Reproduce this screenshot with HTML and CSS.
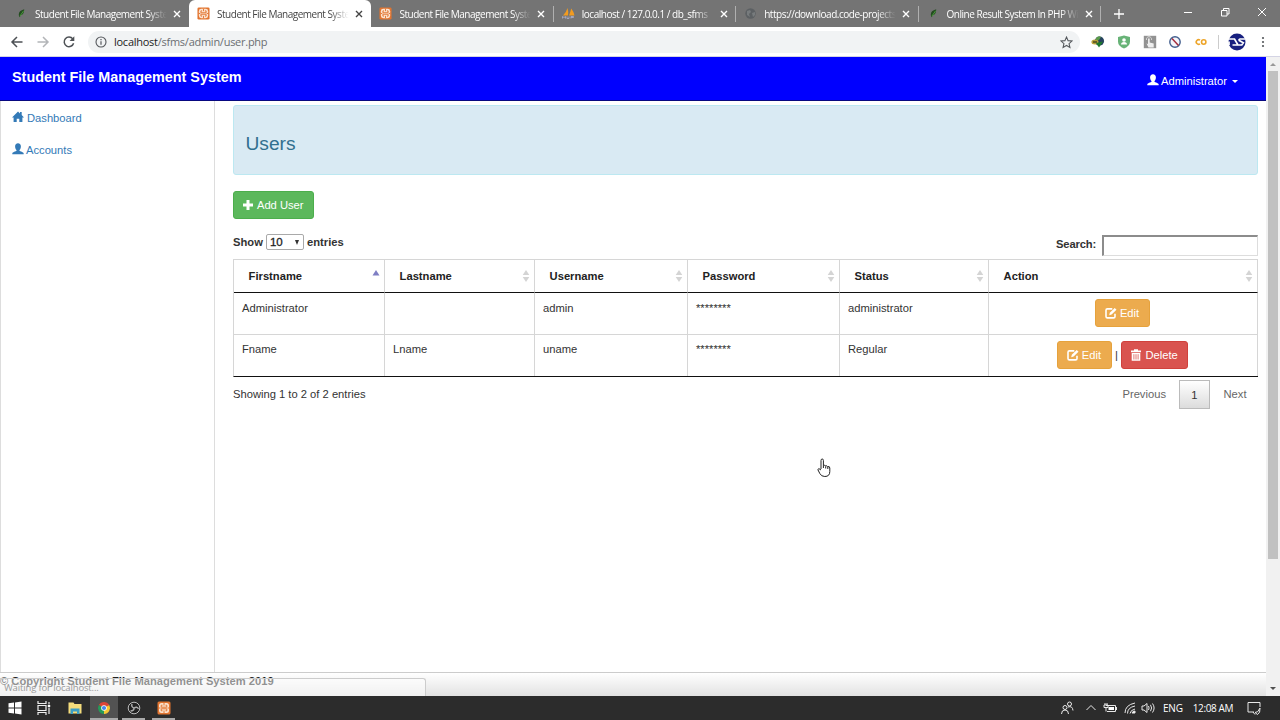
FILE: index.html
```html
<!DOCTYPE html>
<html lang="en">
<head>
    <meta charset="UTF-8">
    <title>Student File Management System</title>
    <link rel="stylesheet" href="styles.css">
</head>
<body>
    <svg class="defs" width="0" height="0">
        <symbol id="xampp" viewBox="0 0 14 14">
            <rect x="0.5" y="0.5" width="13" height="13" rx="1.500" fill="#e2742f"/>
            <rect x="2" y="2" width="10" height="10" rx="2.500" fill="#fbe3d0"/>
            <path d="M5.500 4.200H4.200v2h5.600v-2H8.500M5.500 9.800H4.200v-2h5.600v2H8.500M7 2v2.500M7 9.500V12M2 7h1.500M10.500 7H12" fill="none" stroke="#e2742f" stroke-width="1"/>
        </symbol>
        <symbol id="leaf" viewBox="0 0 12 12">
            <path d="M8.500 2C5 3 3.500 4.500 3.500 7c0 1 .3 2 .8 2.500L5.500 7.500C7.500 7 8.500 5 8.500 2z" fill="#234c20"/>
            <path d="M4.500 8.500L8 3.500" stroke="#4b9b3c" stroke-width=".9" fill="none"/>
        </symbol>
        <symbol id="user" viewBox="0 0 12 12">
            <path d="M6 .3c1.800 0 2.900 1.300 2.900 3.100 0 1.500-.6 2.900-1.400 3.500v.8c.5.700 4.200 1.200 4.200 2.900v.7H.3v-.7c0-1.700 3.700-2.200 4.200-2.900v-.8C3.700 6.300 3.100 4.900 3.100 3.400 3.100 1.600 4.200.3 6 .3z" fill="currentColor"/>
        </symbol>
        <symbol id="home" viewBox="0 0 12 12">
            <path d="M6 .4l2 2V1h1.700v3.100L12 6.500h-1.600V11H7.300V7.700H4.700V11H1.600V6.500H0z" fill="currentColor"/>
        </symbol>
        <symbol id="edit" viewBox="0 0 12 12">
            <path d="M7.300 1.900H2.400Q1 1.900 1 3.300v6.200q0 1.400 1.400 1.400h6.200q1.400 0 1.400-1.400V6.800" fill="none" stroke="currentColor" stroke-width="1.600"/>
            <path d="M4.200 8.200l.6-2.400L9.700.9l1.800 1.800-4.900 4.900z" fill="currentColor"/>
        </symbol>
        <symbol id="trash" viewBox="0 0 12 12">
            <path d="M4 .3h4v1.200h3v1.800H1V1.500h3zM1.700 4h8.600v7.700H1.700z" fill="currentColor"/>
            <path d="M3.900 5.200v5.300M6 5.200v5.300M8.100 5.200v5.300" stroke="#d9534f" stroke-width=".8"/>
        </symbol>
        <symbol id="sort" viewBox="0 0 8 12">
            <path d="M4 0l3.300 5H.7zM.7 7h6.600L4 12z" fill="#d4d4d4"/>
        </symbol>
        <symbol id="close" viewBox="0 0 8 8">
            <path d="M1 1l6 6M7 1L1 7" stroke="currentColor" stroke-width="1.400"/>
        </symbol>
    </svg>

    <div class="tabs">
        <div class="tab first">
            <svg class="favicon"><use href="#leaf"/></svg>
            <span class="tab-title">Student File Management System</span>
            <svg class="tab-close"><use href="#close"/></svg>
        </div>
        <div class="tab active">
            <svg class="favicon"><use href="#xampp"/></svg>
            <span class="tab-title">Student File Management System</span>
            <svg class="tab-close"><use href="#close"/></svg>
        </div>
        <div class="tab line">
            <svg class="favicon"><use href="#xampp"/></svg>
            <span class="tab-title">Student File Management System</span>
            <svg class="tab-close"><use href="#close"/></svg>
        </div>
        <div class="tab line">
            <svg class="favicon" viewBox="0 0 13 13">
                <path d="M1 8.500Q4 6 5.500 1q1.200 4 .5 7.500zM7 8.500Q8.500 5 9.200 1.500 12 5 12.500 8.500z" fill="#f29b1f"/>
                <path d="M.5 11.500v-2l1.500 1 1.500-1v2M5 9.500v2h2v-2M9 11.500v-2h2.500v1H9" fill="none" stroke="#a7a9c4" stroke-width=".9"/>
            </svg>
            <span class="tab-title">localhost / 127.0.0.1 / db_sfms</span>
            <svg class="tab-close"><use href="#close"/></svg>
        </div>
        <div class="tab line">
            <svg class="favicon" viewBox="0 0 13 13">
                <circle cx="6.500" cy="6.500" r="5.200" fill="#5c6063"/>
                <path d="M3 4l3-1 1 2-2 2 1 3-3-2zM8 6l3-1v3l-2 2z" fill="#777b7d"/>
            </svg>
            <span class="tab-title">https://download.code-projects</span>
            <svg class="tab-close"><use href="#close"/></svg>
        </div>
        <div class="tab line">
            <svg class="favicon"><use href="#leaf"/></svg>
            <span class="tab-title">Online Result System In PHP With</span>
            <svg class="tab-close"><use href="#close"/></svg>
        </div>
        <svg class="new-tab" viewBox="0 0 10 10"><path d="M5 0v10M0 5h10" stroke="#fff" stroke-width="1.300"/></svg>
        <div class="window-buttons">
            <svg viewBox="0 0 10 10"><path d="M1 5.500h8" stroke="#fff"/></svg>
            <svg viewBox="0 0 10 10"><path d="M1.500 3.500h5.500v5.500H1.500zM3.500 3.500V1.500H9V7H7" fill="none" stroke="#fff"/></svg>
            <svg viewBox="0 0 10 10"><path d="M1 1l8 8M9 1L1 9" stroke="#fff"/></svg>
        </div>
    </div>

    <div class="toolbar">
        <svg class="nav-icon" viewBox="0 0 14 14"><path d="M12.500 7H2M7 2L2 7l5 5" fill="none" stroke="#4d5155" stroke-width="1.500"/></svg>
        <svg class="nav-icon" viewBox="0 0 14 14"><path d="M1.500 7H12M7 2l5 5-5 5" fill="none" stroke="#b3b5b8" stroke-width="1.500"/></svg>
        <svg class="nav-icon" viewBox="0 0 14 14"><path d="M11.600 8.200A4.800 4.800 0 1 1 10.800 3.900" fill="none" stroke="#4d5155" stroke-width="1.500"/><path d="M12.300 1.300v4.700H7.600z" fill="#4d5155"/></svg>
        <div class="address">
            <svg class="info" viewBox="0 0 12 12"><circle cx="6" cy="6" r="5" fill="none" stroke="#55585c" stroke-width="1.100"/><path d="M6 5.300v3.500M6 3v1.200" stroke="#55585c" stroke-width="1.200"/></svg>
            <span class="url"><b>localhost</b>/sfms/admin/user.php</span>
            <svg class="star" viewBox="0 0 12 12"><path d="M6 1l1.450 3.300 3.600.35-2.700 2.400.8 3.550L6 8.750 2.850 10.600l.8-3.550-2.700-2.400 3.600-.35z" fill="none" stroke="#55585c"/></svg>
        </div>
        <div class="extensions">
            <svg viewBox="0 0 14 14"><circle cx="8.500" cy="6" r="4.600" fill="#27445f"/><path d="M5 3q3-3 5-1L8 5 5 6z" fill="#5a9a4a"/><ellipse cx="4" cy="7" rx="3.600" ry="2.500" fill="#b7a03a"/><path d="M2 7h4" stroke="#4a4a22" stroke-width="1.500"/><path d="M5 8l7-1.500-4 6z" fill="#1e7b2c"/></svg>
            <svg viewBox="0 0 14 14"><path d="M7 .5l6 1.500v4.500q0 4.500-6 7-6-2.500-6-7V2z" fill="#68b377"/><circle cx="7" cy="5" r="1.800" fill="#fff"/><path d="M4 9.500q0-2.500 3-2.500t3 2.500z" fill="#fff"/></svg>
            <svg viewBox="0 0 14 14"><rect x=".8" y=".8" width="12.400" height="12.400" fill="#929292"/><path d="M5.500 12.500L3.500 8.500 5 9V3.500h1.700v4l4 1v4z" fill="#eee"/><path d="M3.500 5a2.600 2.600 0 1 1 5 0" fill="none" stroke="#ddd" stroke-width=".9"/></svg>
            <svg viewBox="0 0 14 14"><circle cx="7" cy="7" r="5.200" fill="#f4f4fa" stroke="#435f8e" stroke-width="1.400"/><path d="M4 3.500l6.500 7" stroke="#a32b3b" stroke-width="1.500"/></svg>
            <svg viewBox="0 0 14 14"><path d="M6 5.200a2.300 2.300 0 1 0 0 3.600" fill="none" stroke="#eda52a" stroke-width="1.600"/><circle cx="9.700" cy="7" r="2.200" fill="none" stroke="#eda52a" stroke-width="1.600"/></svg>
        </div>
        <svg class="avatar" viewBox="0 0 18 18"><circle cx="9" cy="9" r="8.500" fill="#17207f"/><path d="M0 6h6.500l3.500 6H4.500M1 12V8.500M17.500 6h-5.500q-1.500.3-.7 1.600l4 2.200-1.500 2.200h-3" fill="none" stroke="#fff" stroke-width="1.700"/></svg>
        <svg class="more" viewBox="0 0 4 14"><circle cx="2" cy="3" r="1.100"/><circle cx="2" cy="7" r="1.100"/><circle cx="2" cy="11" r="1.100"/></svg>
    </div>

    <div class="viewport">
        <div class="page">
            <nav class="navbar">
                <span class="brand">Student File Management System</span>
                <span class="account"><svg class="icon"><use href="#user"/></svg>Administrator <i class="caret"></i></span>
            </nav>
            <div class="middle">
                <div class="sidebar">
                    <a><svg class="icon"><use href="#home"/></svg>Dashboard</a>
                    <a><svg class="icon"><use href="#user"/></svg>Accounts</a>
                </div>
                <div class="content">
                    <div class="alert">Users</div>
                    <button class="btn success"><svg class="icon" viewBox="0 0 12 12"><path d="M4.500 1h3v3.500H11v3H7.500V11h-3V7.500H1v-3h3.500z" fill="#fff"/></svg> Add User</button>
                    <div class="filters">
                        <div class="show">Show <span class="select">10 <i></i></span> entries</div>
                        <div class="search">Search: <input type="text"></div>
                    </div>
                    <table class="table">
                        <colgroup><col class="c1"><col class="c2"><col class="c3"><col class="c4"><col class="c5"><col></colgroup>
                        <thead>
                            <tr>
                                <th><div>Firstname<svg viewBox="0 0 8 12"><path d="M4 0l3.500 5.500h-7z" fill="#7f7fc4"/></svg></div></th>
                                <th><div>Lastname<svg><use href="#sort"/></svg></div></th>
                                <th><div>Username<svg><use href="#sort"/></svg></div></th>
                                <th><div>Password<svg><use href="#sort"/></svg></div></th>
                                <th><div>Status<svg><use href="#sort"/></svg></div></th>
                                <th><div>Action<svg><use href="#sort"/></svg></div></th>
                            </tr>
                        </thead>
                        <tbody>
                            <tr>
                                <td>Administrator</td>
                                <td></td>
                                <td>admin</td>
                                <td>********</td>
                                <td>administrator</td>
                                <td class="actions"><button class="btn warning"><svg class="icon"><use href="#edit"/></svg> Edit</button></td>
                            </tr>
                            <tr>
                                <td>Fname</td>
                                <td>Lname</td>
                                <td>uname</td>
                                <td>********</td>
                                <td>Regular</td>
                                <td class="actions"><button class="btn warning"><svg class="icon"><use href="#edit"/></svg> Edit</button> | <button class="btn danger"><svg class="icon"><use href="#trash"/></svg> Delete</button></td>
                            </tr>
                        </tbody>
                    </table>
                    <div class="table-footer">
                        <span>Showing 1 to 2 of 2 entries</span>
                        <div class="pages">
                            <span>Previous</span>
                            <span class="current">1</span>
                            <span>Next</span>
                        </div>
                    </div>
                </div>
            </div>
            <div class="footer">© Copyright Student File Management System 2019</div>
            <div class="status">Waiting for localhost...</div>
        </div>
        <div class="scrollbar">
            <i class="up"></i>
            <div class="thumb"></div>
            <i class="down"></i>
        </div>
    </div>

    <div class="taskbar">
        <div class="task"><svg viewBox="0 0 14 14"><path d="M.5 2.300L6 1.500v5H.5zM7 1.400L13.500.5v6H7zM.5 7.500H6v5l-5.500-.8zM7 7.500h6.500v6L7 12.600z" fill="#fff"/></svg></div>
        <div class="task"><svg viewBox="0 0 14 14"><path d="M1 0v2.500h8V0M1 14v-2.500h8V14M1 4.500h8v5H1zM12 1v2.500M12 6.500V13" fill="none" stroke="#eee" stroke-width="1.200"/><path d="M10.800 4h2.400v2h-2.400z" fill="#fff"/></svg></div>
        <div class="task files"><svg viewBox="0 0 14 14"><path d="M.5 1.500h5l1 1.500h7v9.500H.5z" fill="#f5dd7c"/><path d="M2.500 7.500h9v5.500H9V10.500H5V13H2.500z" fill="#3d9fc6"/></svg></div>
        <div class="task open focused"><svg viewBox="0 0 14 14"><path d="M7 7L1.800 4A6 6 0 0 1 12.200 4z" fill="#dc4437"/><path d="M7 7l5.200-3A6 6 0 0 1 7 13z" fill="#f6c833"/><path d="M7 7v6A6 6 0 0 1 1.800 4z" fill="#259b58"/><circle cx="7" cy="7" r="2.800" fill="#fff"/><circle cx="7" cy="7" r="2.100" fill="#4587ee"/></svg></div>
        <div class="task open"><svg viewBox="0 0 14 14"><circle cx="7" cy="7" r="5.800" fill="#222" stroke="#bbb"/><path d="M7 7q-3-1-2-4M7 7q3-2 4.500.8M7 7q0 3-3.500 3" fill="none" stroke="#aaa" stroke-width="1.500"/></svg></div>
        <div class="task open"><svg viewBox="0 0 14 14"><use href="#xampp"/></svg></div>
        <div class="tray">
            <svg class="people" viewBox="0 0 14 14"><circle cx="5" cy="6.500" r="2"/><path d="M1.500 13q0-4 3.500-4t3.500 4"/><circle cx="9.500" cy="3" r="2"/><path d="M8 6q4.500-1.500 5 3.500"/></svg>
            <svg class="chevron" viewBox="0 0 12 12"><path d="M1.500 8L6 3.500 10.500 8"/></svg>
            <svg class="battery" viewBox="0 0 14 12"><path d="M3 3.500h9.500v6H4M2 1v2M4 1v2M1 3h4v2.500H1zM3 5.500v4"/><path d="M5.500 5h5.500v3H5.500z" fill="#fff" stroke="none"/><path d="M13.500 5v3"/></svg>
            <svg class="wifi" viewBox="0 0 12 12"><path d="M1 11Q1 3 11 1M3.500 11.500Q3.500 5.500 11 4M6 11.500Q6.500 8 11 7"/><path d="M8 11q.5-2 3-2v2z" fill="#fff"/></svg>
            <svg class="volume" viewBox="0 0 14 12"><path d="M1 4h2l3-2.500v9L3 8H1zM7.500 4q1.200 2 0 4M9.500 2.800q2.200 3.200 0 6.400M11.500 1.500q3.200 4.500 0 9"/></svg>
            <span class="lang">ENG</span>
            <span class="clock">12:08 AM</span>
            <svg class="notify" viewBox="0 0 14 14"><path d="M7 11H1V1.500h12V6M6 11l2 2.500M8 11.500q3 .5 5-4.500.5 5-2.500 6.500z"/></svg>
        </div>
    </div>

    <svg class="cursor" viewBox="0 0 14 20"><path d="M4 11V2.500Q4 1 5.200 1t1.200 1.500V7.500Q8 6.500 8.600 8q1.400-.8 2 .6 2.200-.6 2.200 1.400v3.500q0 5-5 5-3.500 0-5-3L.8 11.500Q1.500 9.500 4 12M6.400 7.500V10M8.700 8.300V10.500M10.800 9v2" fill="#fff" stroke="#222" stroke-width="1"/></svg>
</body>
</html>
```
FILE: styles.css
```css
* {
    box-sizing: border-box;
}
body {
    margin: 0;
    width: 1280px;
    height: 720px;
    overflow: hidden;
    display: flex;
    flex-direction: column;
    position: relative;
    font-family: "Liberation Sans", Arial, sans-serif;
    font-size: 11.2px;
    line-height: 16px;
    color: #333;
    background-color: #fff;
}
.defs {
    position: absolute;
}
svg {
    flex: none;
}

/* browser tabs */
.tabs {
    height: 27px;
    flex: none;
    display: flex;
    align-items: center;
    background-color: #747474;
    font-family: "Open Sans", sans-serif;
    font-size: 10px;
    color: #fff;
}
.tab {
    width: 182.400px;
    height: 27px;
    padding: 0 8px;
    display: flex;
    align-items: center;
    position: relative;
}
.tab.first {
    width: 189px;
    padding-left: 15px;
}
.tab.active {
    background-color: #fff;
    color: #444;
    border-radius: 6px 6px 0 0;
}
.tab.line::after {
    content: "";
    position: absolute;
    right: 0;
    top: 6px;
    height: 16px;
    border-right: 1px solid #b0b0b0;
}
.favicon {
    width: 13px;
    height: 13px;
    margin-right: 7px;
}
.tab-title {
    width: 133px;
    flex: none;
    overflow: hidden;
    white-space: nowrap;
    letter-spacing: -0.480px;
    -webkit-mask-image: linear-gradient(to right, #000 85%, transparent 99%);
    mask-image: linear-gradient(to right, #000 85%, transparent 99%);
}
.tab-close {
    width: 8px;
    height: 8px;
    margin-left: 5px;
}
.new-tab {
    width: 10px;
    height: 10px;
    margin-left: 13px;
}
.window-buttons {
    display: flex;
    gap: 27px;
    margin-left: auto;
    margin-right: 13px;
    padding-bottom: 3px;
}
.window-buttons svg {
    width: 10px;
    height: 10px;
}

/* address bar */
.toolbar {
    height: 30px;
    flex: none;
    display: flex;
    align-items: center;
    padding: 1px 15px 0 10px;
    border-bottom: 1px solid #d4d4e4;
    background-color: #fff;
}
.nav-icon {
    width: 14px;
    height: 14px;
    margin-right: 12px;
}
.address {
    width: 993px;
    height: 22px;
    margin-right: 11px;
    padding: 0 7px;
    display: flex;
    align-items: center;
    border-radius: 11px;
    background-color: #f1f3f4;
    font-family: "Open Sans", sans-serif;
    font-size: 11px;
    color: #6b6e72;
}
.url {
    margin-left: 7px;
    letter-spacing: -0.260px;
}
.url b {
    font-weight: normal;
    color: #222;
}
.info {
    width: 12px;
    height: 12px;
}
.star {
    width: 13px;
    height: 13px;
    margin-left: auto;
}
.extensions {
    display: flex;
    gap: 11.700px;
    padding-right: 10px;
    border-right: 1px solid #ccc;
}
.extensions svg {
    width: 14px;
    height: 14px;
}
.avatar {
    width: 18px;
    height: 18px;
    margin-left: 9px;
}
.more {
    width: 4px;
    height: 14px;
    margin-left: 15px;
    fill: #55585c;
}

/* page */
.viewport {
    height: 639px;
    flex: none;
    display: flex;
}
.page {
    width: 1266px;
    display: flex;
    flex-direction: column;
    position: relative;
}
.navbar {
    height: 44px;
    flex: none;
    display: flex;
    justify-content: space-between;
    padding: 12px 28px 0 12px;
    background-color: #0000ff;
    border-bottom: 1px solid #080880;
    color: #fff;
}
.brand {
    font-size: 14.400px;
    font-weight: bold;
}
.account {
    padding-top: 4px;
}
.icon {
    width: 12px;
    height: 12px;
    vertical-align: -1px;
}
.account .icon {
    margin-right: 2px;
}
.caret {
    display: inline-block;
    margin-left: 2px;
    vertical-align: 2px;
    border-top: 3px solid #fff;
    border-left: 3px solid transparent;
    border-right: 3px solid transparent;
}
.middle {
    flex: 1;
    display: flex;
}
.sidebar {
    width: 215px;
    padding: 9px 11px;
    display: flex;
    flex-direction: column;
    gap: 16px;
    border-left: 1px solid #ddd;
    border-right: 1px solid #ddd;
    color: #337ab7;
}
.sidebar .icon {
    margin-right: 2px;
}
.sidebar a:first-child .icon {
    margin-right: 3px;
}
.content {
    flex: 1;
    padding: 4px 8px 0 18px;
}
.alert {
    height: 70px;
    padding: 27px 11.500px;
    border: 1px solid #bce8f1;
    border-radius: 3px;
    background-color: #d9eaf3;
    color: #31708f;
    font-size: 19.200px;
    line-height: 22px;
    margin-bottom: 16px;
}
.btn {
    height: 28px;
    padding: 0 9px;
    border: 1px solid #4cae4c;
    border-radius: 3px;
    font-family: inherit;
    font-size: 11.200px;
    line-height: 16px;
    color: #fff;
}
.btn .icon {
    margin-left: -1px;
    vertical-align: -2px;
}
.success {
    width: 81px;
    background-color: #5cb85c;
}
.warning {
    width: 55px;
    background-color: #ecab4e;
    border-color: #e6a23c;
}
.danger {
    background-color: #d9534f;
    border-color: #d0413c;
    width: 67px;
}
.filters {
    display: flex;
    justify-content: space-between;
    margin-top: 15px;
    height: 25px;
    font-weight: bold;
}
.select {
    display: inline-flex;
    align-items: center;
    justify-content: space-between;
    width: 38px;
    height: 16px;
    padding: 0 4px 0 3px;
    border: 1px solid #a9a9a9;
    border-radius: 2px;
    vertical-align: top;
    font-size: 11.500px;
    font-weight: normal;
    -webkit-text-stroke: 0.300px #222;
    color: #222;
}
.select i {
    border-top: 5px solid #333;
    border-left: 2.500px solid transparent;
    border-right: 2.500px solid transparent;
}
.search {
    display: flex;
    gap: 6px;
    line-height: 21px;
    letter-spacing: -0.150px;
}
.search input {
    width: 156px;
    height: 21px;
    margin-top: 1px;
    border: 1px solid #ddd;
    border-top: 2px solid #8c8c8c;
    border-left: 2px solid #8c8c8c;
    background-color: #fff;
}
.table {
    width: 1025px;
    table-layout: fixed;
    border-collapse: separate;
    border-spacing: 0;
    border-left: 1px solid #d6d6d6;
    border-bottom: 1px solid #111;
}
.c1 { width: 151px; }
.c2 { width: 150px; }
.c3 { width: 153px; }
.c4 { width: 152px; }
.c5 { width: 149px; }
.table th {
    height: 34px;
    padding: 0 4px 0 14.600px;
    border-top: 1px solid #d6d6d6;
    border-right: 1px solid #d6d6d6;
    border-bottom: 1px solid #111;
    text-align: left;
    color: #222;
}
.table th div {
    display: flex;
    align-items: center;
    justify-content: space-between;
}
.table th svg {
    width: 8px;
    height: 12px;
}
.table td {
    height: 42px;
    padding: 7px 8px 0;
    vertical-align: top;
    border-right: 1px solid #d6d6d6;
    border-bottom: 1px solid #d6d6d6;
}
.table tr:last-child td {
    height: 41px;
    padding-top: 6px;
    border-bottom: none;
}
.table td.actions {
    padding: 6px 9px 0 8px;
    text-align: center;
}
.table-footer {
    display: flex;
    justify-content: space-between;
    padding-top: 3px;
}
.table-footer > span {
    padding-top: 6px;
}
.pages {
    display: flex;
    line-height: 29px;
    color: #666;
}
.pages span {
    padding: 0 11.500px;
}
.pages .current {
    width: 31px;
    height: 29px;
    margin: 0 2px 0 1.500px;
    padding: 0;
    line-height: 28px;
    text-align: center;
    border: 1px solid #bbb;
    background: linear-gradient(to bottom, #fff 0%, #dcdcdc 100%);
    color: #333;
}
.footer {
    height: 24px;
    border-top: 1px solid #ccc;
    background: linear-gradient(to bottom, #fff, #e2e2e2);
    font-weight: bold;
    color: #222;
    white-space: nowrap;
}
.status {
    position: absolute;
    left: 0;
    bottom: 0;
    width: 426px;
    height: 18px;
    padding-left: 4px;
    border: 1px solid #ccc;
    border-left: none;
    border-bottom: none;
    border-radius: 0 3px 0 0;
    background-color: rgba(255, 255, 255, 0.500);
    font-family: "Open Sans", sans-serif;
    font-size: 9.500px;
    letter-spacing: -0.150px;
    line-height: 18px;
    color: #999;
}
.scrollbar {
    width: 14px;
    display: flex;
    flex-direction: column;
    align-items: center;
    background-color: #f1f1f1;
    padding: 6px 0;
}
.scrollbar i {
    border-left: 3px solid transparent;
    border-right: 3px solid transparent;
}
.scrollbar .up {
    border-bottom: 3px solid #999;
}
.scrollbar .down {
    margin-top: auto;
    border-top: 3px solid #505050;
}
.thumb {
    width: 10px;
    height: 488px;
    margin-top: 5px;
    background-color: #c1c1c1;
}

/* taskbar */
.taskbar {
    height: 24px;
    flex: none;
    display: flex;
    background-color: #2c2c2c;
    color: #fff;
}
.task {
    width: 29px;
    height: 24px;
    display: flex;
    align-items: center;
    justify-content: center;
}
.task.files {
    width: 33px;
}
.task svg {
    width: 14px;
    height: 14px;
}
.task.open {
    width: 23px;
    margin: 0 3px 0 4px;
    padding-top: 2px;
    border-bottom: 2px solid #aaa;
}
.task.focused {
    width: 28px;
    margin: 0 0 0 -1px;
    background-color: #525252;
}
.tray {
    margin-left: auto;
    padding-right: 19px;
    display: flex;
    align-items: center;
    font-family: "Open Sans", sans-serif;
    font-size: 10px;
}
.tray svg {
    width: 14px;
    height: 14px;
    fill: none;
    stroke: #e8e8e8;
    stroke-width: 1;
}
.tray .chevron {
    width: 12px;
    height: 12px;
    margin-left: 11px;
}
.tray .battery {
    margin-left: 6px;
}
.tray .wifi {
    width: 12px;
    height: 12px;
    margin-left: 7px;
}
.tray .volume {
    margin-left: 5px;
}
.lang {
    margin-left: 8px;
    letter-spacing: -0.200px;
}
.clock {
    margin-left: 10px;
    letter-spacing: -0.400px;
}
.tray .notify {
    margin-left: 14px;
}
.cursor {
    position: absolute;
    left: 817px;
    top: 458px;
    width: 14px;
    height: 20px;
}
```
